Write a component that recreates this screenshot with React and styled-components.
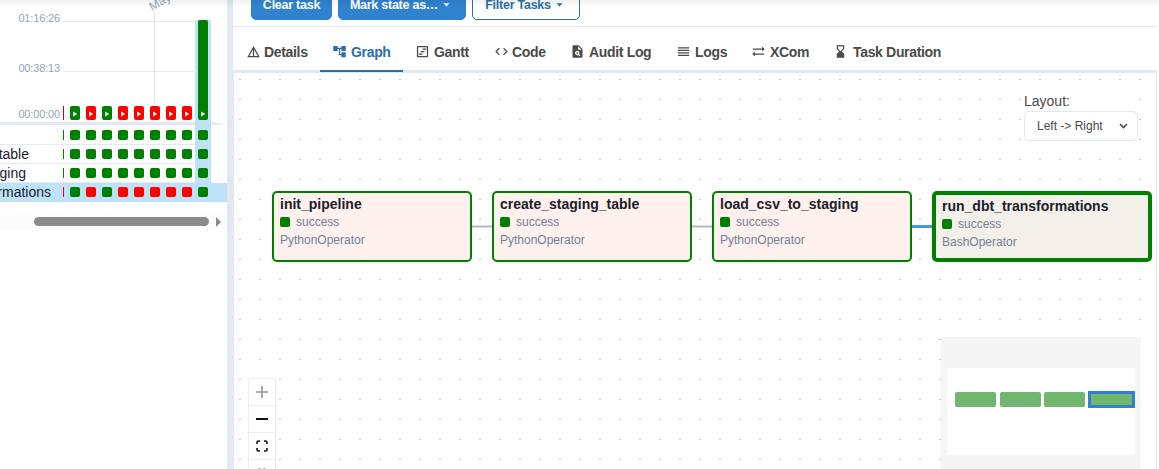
import React from 'react';
import styled, { createGlobalStyle } from 'styled-components';
import {
  MdDetails, MdAccountTree, MdOutlineViewTimeline, MdCode, MdPlagiarism,
  MdReorder, MdSyncAlt, MdHourglassBottom, MdArrowDropDown,
} from 'react-icons/md';

const Global = createGlobalStyle`
  * { box-sizing: border-box; }
  body { margin: 0; background: #fff; overflow: hidden; font-family: "Liberation Sans", Arial, sans-serif; color: #1a202c; }
`;

const Page = styled.div`
  position: relative;
  display: flex;
  width: 1159px;
  height: 469px;
  overflow: hidden;
`;
const TopShade = styled.div`
  position: absolute;
  inset: 0 0 auto 0;
  height: 7px;
  background: linear-gradient(rgba(0, 0, 0, 0.06), rgba(0, 0, 0, 0));
`;

/* Left: run grid */
const GridPanel = styled.aside`
  width: 227px;
  flex: none;
  overflow: hidden;
`;
const Durations = styled.div`
  display: flex;
  height: 122px;
`;
const Axis = styled.div`
  width: 63px;
  height: 122px;
  padding: 11px 3px 0 0;
  display: flex;
  flex-direction: column;
  align-items: flex-end;
  font-size: 11px;
  letter-spacing: -0.15px;
  line-height: 14px;
  color: #94a3b8;
`;
const AxisLabel = styled.span`
  margin-bottom: ${(p) => p.$gap || 0}px;
`;
const Rule = styled.svg`
  display: block;
`;
const TaskRow = styled.div`
  display: flex;
  height: 19px;
  background: ${(p) => (p.$active ? '#bee3f8' : '#fff')};
`;
const TaskName = styled.div`
  width: 63px;
  flex: none;
  display: flex;
  justify-content: flex-end;
  padding-right: ${(p) => p.$end}px;
  font-size: 14px;
  line-height: 19px;
  white-space: nowrap;
  border-bottom: 1px solid ${(p) => (p.$active ? '#bee3f8' : '#e7ebf0')};
`;
const Cells = styled.div`
  display: flex;
  align-items: center;
  border-bottom: 1px solid ${(p) => (p.$active ? '#bee3f8' : '#e7ebf0')};
`;
const Sliver = styled.i`
  width: 1px;
  height: 10px;
  margin-right: 3px;
  background: ${(p) => p.$color};
`;
const Cell = styled.div`
  width: 16px;
  height: 19px;
  display: flex;
  align-items: center;
  justify-content: center;
  background: ${(p) => (p.$selected ? '#bee3f8' : 'transparent')};
`;
const Square = styled.i`
  width: 10px;
  height: 10px;
  border-radius: 2px;
  background: ${(p) => p.$color};
`;
const Scroll = styled.div`
  display: flex;
  align-items: center;
  height: 17px;
  margin-top: 11px;
  padding-left: 34px;
  background: #fcfcfc;
  gap: 7px;
`;
const Thumb = styled.div`
  width: 175px;
  height: 9px;
  border-radius: 5px;
  background: #8b8b8b;
`;

const Splitter = styled.div`
  width: 6px;
  flex: none;
  background: #e2e8f0;
`;

/* Right: task details */
const Main = styled.main`
  flex: none;
  width: 924px;
  display: flex;
  flex-direction: column;
`;
const Actions = styled.div`
  display: flex;
  gap: 6px;
  height: 27px;
  padding-left: 18px;
  border-bottom: 1px solid #e6eaf0;
`;
const Button = styled.div`
  width: ${(p) => p.$w}px;
  height: 32px;
  margin-top: -12px;
  padding-top: 1px;
  display: flex;
  align-items: center;
  justify-content: center;
  gap: 1px;
  border-radius: 5px;
  border: 1px solid ${(p) => (p.$outline ? '#2b6cb0' : '#3182ce')};
  background: ${(p) => (p.$outline ? '#fff' : '#3182ce')};
  color: ${(p) => (p.$outline ? '#2b6cb0' : '#fff')};
  font-size: 12.5px;
  letter-spacing: -0.25px;
  font-weight: 700;
  white-space: nowrap;
`;
const Tabs = styled.nav`
  display: flex;
  height: 46px;
  padding-left: 1px;
  border-bottom: 3px solid #e2e8f0;
`;
const Tab = styled.div`
  width: ${(p) => p.$w}px;
  height: 45px;
  padding: 6px 0 0 12px;
  display: flex;
  align-items: center;
  gap: ${(p) => p.$gap}px;
  border-bottom: 2px solid ${(p) => (p.$active ? '#2b6cb0' : 'transparent')};
  color: ${(p) => (p.$active ? '#2b6cb0' : '#4a4a4a')};
  font-size: 14px;
  letter-spacing: -0.33px;
  font-weight: 700;
  white-space: nowrap;
  svg { flex: none; }
`;

const Canvas = styled.section`
  position: relative;
  flex: 1;
  width: 924px;
  border: 1px solid #e2e8f0;
  border-width: 0 1px;
  overflow: hidden;
`;
const Backdrop = styled.svg`
  position: absolute;
  inset: 0;
`;
const Node = styled.div`
  position: absolute;
  left: ${(p) => p.$x}px;
  top: 118px;
  width: ${(p) => (p.$selected ? 220 : 200)}px;
  height: 71px;
  padding: 3px 6px;
  border: ${(p) => (p.$selected ? 4 : 2)}px solid #008000;
  border-radius: 5px;
  background: ${(p) => (p.$selected ? '#f3f0ea' : '#fff1ee')};
`;
const NodeName = styled.div`
  font-size: 14px;
  line-height: 17px;
  font-weight: 700;
`;
const NodeState = styled.div`
  display: flex;
  align-items: center;
  gap: 6px;
  height: 18px;
  font-size: 12px;
  color: #718096;
`;
const NodeType = styled.div`
  font-size: 12px;
  line-height: 18px;
  color: #718096;
`;
const LayoutPicker = styled.div`
  position: absolute;
  left: 789px;
  top: 18px;
  width: 116px;
  height: 52px;
  padding-left: 1px;
  background: #fff;
  font-size: 14px;
  line-height: 20px;
  color: #4a4a4a;
`;
const Select = styled.div`
  display: flex;
  align-items: center;
  justify-content: space-between;
  width: 114px;
  height: 30px;
  padding: 0 9px 0 12px;
  border: 1px solid #e2e8f0;
  border-radius: 5px;
  font-size: 12px;
`;
const Controls = styled.div`
  position: absolute;
  left: 14px;
  top: 305px;
  width: 28px;
  border: 1px solid #eee;
  border-bottom: 0;
`;
const Control = styled.div`
  height: 27px;
  display: flex;
  align-items: center;
  justify-content: center;
  background: #fff;
  border-bottom: 1px solid #eee;
`;
const MiniMap = styled.svg`
  position: absolute;
  left: 707px;
  top: 264px;
`;

const G = '#008000';
const R = '#ff0000';
const runs = [G, R, G, R, R, R, R, R, G];
const allGreen = runs.map(() => G);
const tasks = [
  { name: '', end: 0, cells: allGreen, first: G },
  { name: 'create_staging_table', end: 34, cells: allGreen, first: G },
  { name: 'load_csv_to_staging', end: 37, cells: allGreen, first: G },
  { name: 'run_dbt_transformations', end: 12, cells: runs, first: R, active: true },
];
const tabs = [
  ['Details', MdDetails, 86, 3],
  ['Graph', MdAccountTree, 83, 4],
  ['Gantt', MdOutlineViewTimeline, 79, 4],
  ['Code', MdCode, 76, 3],
  ['Audit Log', MdPlagiarism, 106, 4],
  ['Logs', MdReorder, 75, 4],
  ['XCom', MdSyncAlt, 82, 4],
  ['Task Duration', MdHourglassBottom, 132, 5],
];
const nodes = [
  ['init_pipeline', 'PythonOperator', 38],
  ['create_staging_table', 'PythonOperator', 258],
  ['load_csv_to_staging', 'PythonOperator', 478],
  ['run_dbt_transformations', 'BashOperator', 698, true],
];

function DurationChart() {
  return (
    <Durations>
      <Axis>
        <AxisLabel $gap={36}>01:16:26</AxisLabel>
        <AxisLabel $gap={32}>00:38:13</AxisLabel>
        <AxisLabel>00:00:00</AxisLabel>
      </Axis>
      <svg width="164" height="122">
        <path d="M0 21.5H132M0 71.5H132M0 117.5H132M91.5 12V106" stroke="#e6e9ed" />
        <text x="89" y="11" fontSize="12" fill="#94a3b8" transform="rotate(-30 89 11)">May</text>
        <rect x="132" y="20" width="16" height="102" fill="#bee3f8" />
        <rect x="0" y="106" width="1" height="14" fill="#c00" />
        {runs.map((c, i) => {
          const x = 7 + i * 16;
          const top = i === 8 ? 20 : 106;
          return (
            <g key={i}>
              <rect x={x} y={top} width="10" height={120 - top} rx="2" fill={c} />
              <path d={`M${x + 3.2} 111.500l4 2.500l-4 2.500z`} fill="#fff" />
            </g>
          );
        })}
      </svg>
    </Durations>
  );
}

export default function App() {
  return (
    <Page>
      <Global />
      <GridPanel>
        <DurationChart />
        <Rule width="227" height="4">
          <path d="M0 0H211L227 2.500L211 3H0z" fill="#e2e8f0" />
          <rect x="195" width="16" height="4" fill="#c5dff2" />
        </Rule>
        {tasks.map((t, i) => (
          <TaskRow key={i} $active={t.active}>
            <TaskName $end={t.end} $active={t.active}>{t.name}</TaskName>
            <Cells $active={t.active}>
              <Sliver $color={t.first} />
              {t.cells.map((c, k) => (
                <Cell key={k} $selected={k === 8}><Square $color={c} /></Cell>
              ))}
            </Cells>
          </TaskRow>
        ))}
        <Scroll>
          <Thumb />
          <svg width="6" height="10"><path d="M0 0L5 5L0 10z" fill="#8b8b8b" /></svg>
        </Scroll>
      </GridPanel>
      <Splitter />
      <Main>
        <Actions>
          <Button $w={81}>Clear task</Button>
          <Button $w={128}>Mark state as… <MdArrowDropDown size={15} /></Button>
          <Button $w={108} $outline>Filter Tasks <MdArrowDropDown size={15} /></Button>
        </Actions>
        <Tabs>
          {tabs.map(([name, Icon, w, gap]) => (
            <Tab key={name} $w={w} $gap={gap} $active={name === 'Graph'}>
              <Icon size={15} />
              {name}
            </Tab>
          ))}
        </Tabs>
        <Canvas>
          <Backdrop width="922" height="396">
            <defs>
              <pattern id="dots" x="5" y="6" width="20" height="20" patternUnits="userSpaceOnUse">
                <rect width="2" height="1" fill="#c4c4c4" />
              </pattern>
            </defs>
            <rect width="922" height="396" fill="url(#dots)" />
            <path d="M237 153.500H259M457 153.500H479" stroke="#b1b8c4" strokeWidth="2" />
            <path d="M677 153.500H699" stroke="#4299e1" strokeWidth="3" />
          </Backdrop>
          {nodes.map(([name, type, x, selected]) => (
            <Node key={name} $x={x} $selected={selected}>
              <NodeName>{name}</NodeName>
              <NodeState><Square $color={G} />success</NodeState>
              <NodeType>{type}</NodeType>
            </Node>
          ))}
          <LayoutPicker>
            Layout:
            <Select>
              Left -&gt; Right
              <svg width="9" height="6" fill="none" stroke="#4a4a4a" strokeWidth="1.6"><path d="M1 1L4.500 4.500L8 1" /></svg>
            </Select>
          </LayoutPicker>
          <Controls>
            <Control><svg width="12" height="12"><path d="M0 6H12M6 0V12" stroke="#999" strokeWidth="1.6" /></svg></Control>
            <Control><svg width="12" height="2"><path d="M0 1H12" stroke="#111" strokeWidth="2" /></svg></Control>
            <Control>
              <svg width="12" height="12" fill="none" stroke="#111" strokeWidth="1.6">
                <path d="M1 4V2.500Q1 1 2.500 1H4M8 1H9.500Q11 1 11 2.500V4M11 8V9.500Q11 11 9.500 11H8M4 11H2.500Q1 11 1 9.500V8" />
              </svg>
            </Control>
            <Control>
              <svg width="10" height="10" fill="none" stroke="#777" strokeWidth="1.4">
                <path d="M1 4V2Q2.500 0 4 2M6 2Q7.500 0 9 2V4" />
              </svg>
            </Control>
          </Controls>
          <MiniMap width="200" height="132">
            <rect width="200" height="132" fill="#f5f5f5" />
            <rect x="6" y="31" width="188" height="87" fill="#fff" />
            {[14, 59, 103].map((x) => (
              <rect key={x} x={x} y="55" width="41" height="15" rx="2" fill="#70b870" />
            ))}
            <rect x="148.500" y="55.500" width="44" height="14" fill="#70b870" stroke="#3182ce" strokeWidth="3" />
          </MiniMap>
        </Canvas>
      </Main>
      <TopShade />
    </Page>
  );
}
